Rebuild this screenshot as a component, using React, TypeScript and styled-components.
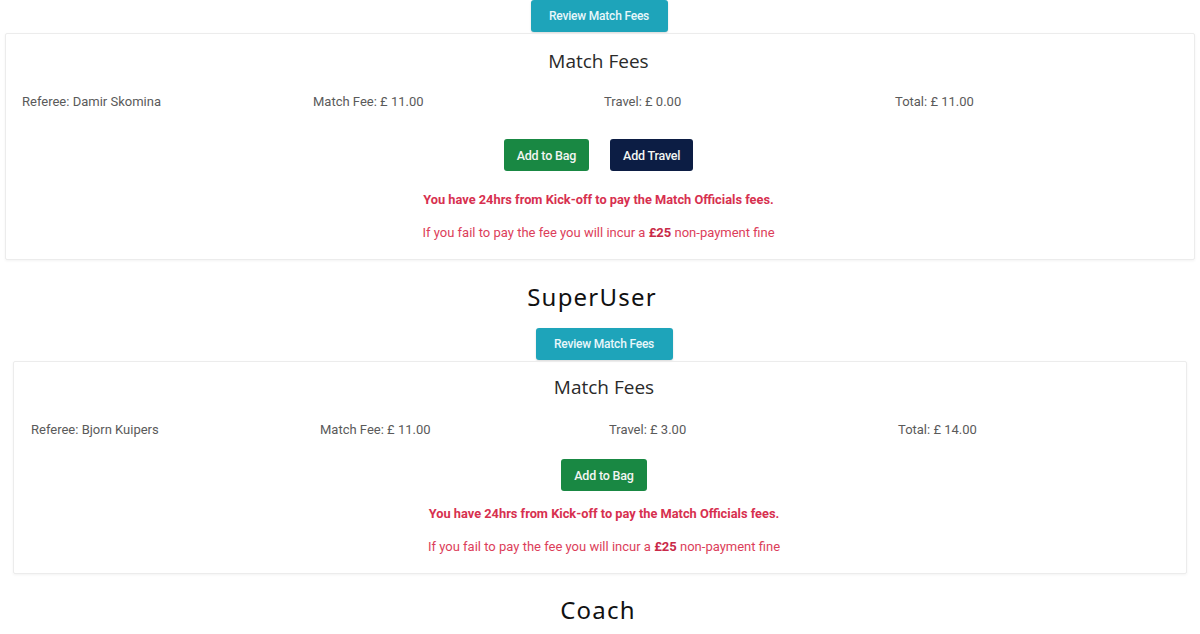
import styled, { createGlobalStyle } from "styled-components";

const GlobalStyle = createGlobalStyle`
  body {
    margin: 0;
    background: #fff;
    font-family: Roboto, "Liberation Sans", sans-serif;
  }
`;

const Page = styled.div`
  width: 1200px;
  display: flex;
  flex-direction: column;
`;

const Block = styled.div<{ $side: number }>`
  display: flex;
  flex-direction: column;
  align-items: center;
  padding: 0 ${(p) => p.$side}px;
`;

const ReviewButton = styled.button<{ $shift: number }>`
  height: 32px;
  width: 137px;
  margin-left: ${(p) => p.$shift}px;
  border: none;
  border-radius: 3px;
  background: #1ea4ba;
  color: #e8f7fa;
  font-family: Roboto, sans-serif;
  font-size: 12px;
  font-weight: 500;
  letter-spacing: -0.2px;
  box-shadow: 0 1px 2px rgba(0, 0, 0, 0.15);
`;

const Card = styled.div<{ $padT: number; $padL: number; $padR: number }>`
  align-self: stretch;
  margin-top: 1px;
  padding: ${(p) => p.$padT}px ${(p) => p.$padR}px 18px ${(p) => p.$padL}px;
  border: 1px solid #ececec;
  border-radius: 2px;
  box-shadow: 0 1px 3px rgba(0, 0, 0, 0.05);
  display: flex;
  flex-direction: column;
  align-items: center;
`;

const Title = styled.div<{ $gap: number }>`
  font-family: "Open Sans", Roboto, sans-serif;
  font-size: 19px;
  line-height: 24px;
  color: #2a2a2a;
  margin-bottom: ${(p) => p.$gap}px;
`;

const Row = styled.div<{ $col: number }>`
  align-self: stretch;
  display: grid;
  grid-template-columns: repeat(4, ${(p) => p.$col}px);
  font-size: 13px;
  line-height: 16px;
  color: #5a5a5a;
`;

const Actions = styled.div<{ $top: number; $bottom: number }>`
  display: flex;
  gap: 21px;
  margin: ${(p) => p.$top}px 0 ${(p) => p.$bottom}px;
`;

const ActionButton = styled.button<{ $dark?: boolean }>`
  height: 32px;
  padding: 0 13px;
  border: none;
  border-radius: 3px;
  background: ${(p) => (p.$dark ? "#0c1d44" : "#198843")};
  color: #f2f5f2;
  font-family: Roboto, sans-serif;
  font-size: 12.5px;
  font-weight: 500;
  letter-spacing: -0.2px;
`;

const Warning = styled.div`
  font-size: 12.8px;
  line-height: 16px;
  font-weight: 700;
  color: #d7304f;
`;

const Notice = styled.div`
  margin-top: 17px;
  font-size: 13px;
  line-height: 16px;
  color: #dc3e5a;

  b {
    font-weight: 700;
    color: #c92a48;
  }
`;

const Caption = styled.div<{ $top: number; $bottom: number; $shift: number }>`
  margin: ${(p) => p.$top}px 0 ${(p) => p.$bottom}px ${(p) => p.$shift}px;
  font-family: "Noto Sans", sans-serif;
  font-size: 24px;
  line-height: 28px;
  font-weight: 400;
  letter-spacing: 1.2px;
  color: #111;
`;

type Fees = {
  referee: string;
  fee: string;
  travel: string;
  total: string;
};

type PanelProps = {
  fees: Fees;
  travel: boolean;
  side: number;
  shift: number;
  padT: number;
  padL: number;
  padR: number;
  titleGap: number;
  col: number;
  actionsTop: number;
  actionsBottom: number;
  caption: string;
  captionTop: number;
  captionBottom: number;
  captionShift: number;
};

function FeesPanel(props: PanelProps) {
  const { fees } = props;
  return (
    <Block $side={props.side}>
      <ReviewButton $shift={props.shift}>Review Match Fees</ReviewButton>
      <Card $padT={props.padT} $padL={props.padL} $padR={props.padR}>
        <Title $gap={props.titleGap}>Match Fees</Title>
        <Row $col={props.col}>
          <div>Referee: {fees.referee}</div>
          <div>Match Fee: £ {fees.fee}</div>
          <div>Travel: £ {fees.travel}</div>
          <div>Total: £ {fees.total}</div>
        </Row>
        <Actions $top={props.actionsTop} $bottom={props.actionsBottom}>
          <ActionButton>Add to Bag</ActionButton>
          {props.travel && <ActionButton $dark>Add Travel</ActionButton>}
        </Actions>
        <Warning>You have 24hrs from Kick-off to pay the Match Officials fees.</Warning>
        <Notice>
          If you fail to pay the fee you will incur a <b>£25</b> non-payment fine
        </Notice>
      </Card>
      <Caption
        $top={props.captionTop}
        $bottom={props.captionBottom}
        $shift={props.captionShift}
      >
        {props.caption}
      </Caption>
    </Block>
  );
}

export default function App() {
  return (
    <Page>
      <GlobalStyle />
      <FeesPanel
        fees={{ referee: "Damir Skomina", fee: "11.00", travel: "0.00", total: "11.00" }}
        travel
        side={5}
        shift={-2}
        padT={15}
        padL={16}
        padR={19}
        titleGap={21}
        col={291}
        actionsTop={29}
        actionsBottom={21}
        caption="SuperUser"
        captionTop={23}
        captionBottom={17}
        captionShift={-16}
      />
      <FeesPanel
        fees={{ referee: "Bjorn Kuipers", fee: "11.00", travel: "3.00", total: "14.00" }}
        travel={false}
        side={13}
        shift={8}
        padT={13}
        padL={17}
        padR={9}
        titleGap={23}
        col={289}
        actionsTop={21}
        actionsBottom={15}
        caption="Coach"
        captionTop={22}
        captionBottom={0}
        captionShift={-4}
      />
    </Page>
  );
}
